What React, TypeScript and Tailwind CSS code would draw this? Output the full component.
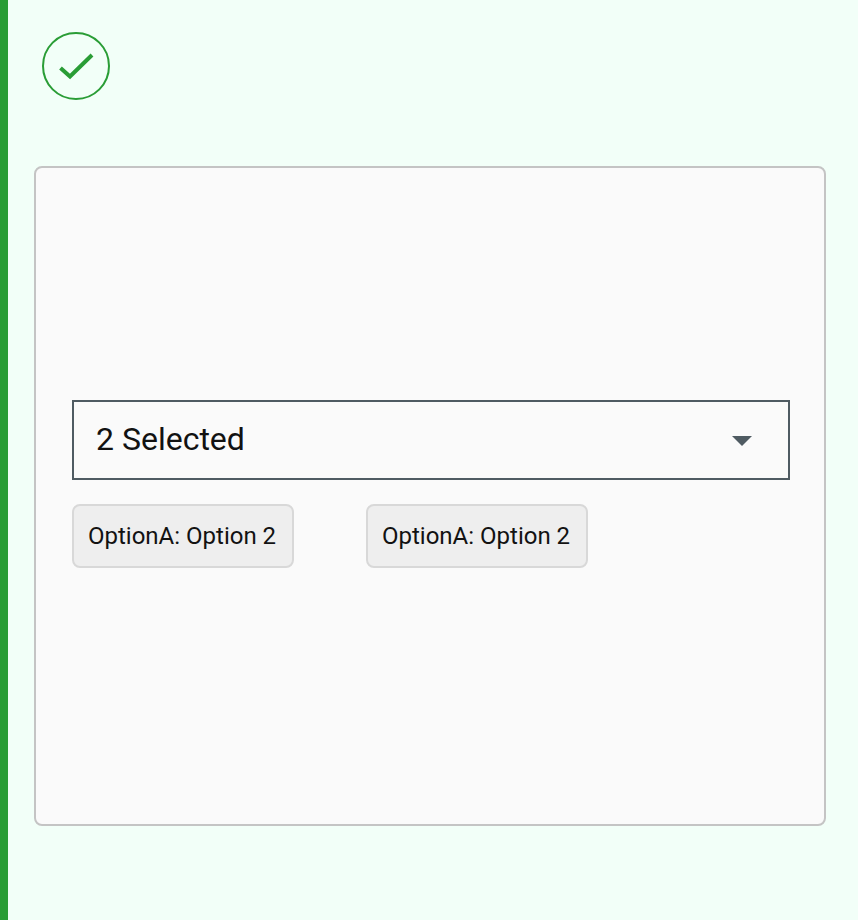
import React from "react";

const chips = ["OptionA: Option 2", "OptionA: Option 2"];

const App = () => {
  return (
    <div className="flex h-[920px] w-full overflow-hidden border-l-8 border-[#2a9d36] bg-[#f2fff8] font-['Roboto',sans-serif]">
      <div className="flex w-full flex-col pl-[26px] pr-[32px] pt-[32px]">
        <div className="ml-[8px] flex h-[68px] w-[68px] items-center justify-center rounded-full border-2 border-[#2a9d36]">
          <svg width="36" height="30" viewBox="0 0 36 30" fill="none">
            <path d="M2.5 17 L12 25.5 L34 4" stroke="#2a9d36" strokeWidth="4" />
          </svg>
        </div>

        <div className="mt-[66px] flex h-[660px] flex-col justify-center rounded-lg border-2 border-[#c4c4c4] bg-[#fafafa] px-[36px]">
          <div className="flex h-[80px] w-[718px] items-center justify-between border-2 border-[#4f5b62] pl-[22px] pr-[36px]">
            <span className="mb-[2px] text-[32px] leading-none text-[#121212]">2 Selected</span>
            <svg width="20" height="10" viewBox="0 0 20 10" className="mt-[2px]">
              <path d="M0 0 H20 L10 10 Z" fill="#4f5b62" />
            </svg>
          </div>

          <div className="my-[24px] flex gap-[72px]">
            {chips.map((chip, i) => (
              <div
                key={i}
                className="flex h-[64px] w-[222px] items-center rounded-lg border-2 border-[#d8d8d8] bg-[#eeeeee] pl-[14px] text-[24px] text-[#121212]"
              >
                {chip}
              </div>
            ))}
          </div>
        </div>
      </div>
    </div>
  );
};

export default App;
